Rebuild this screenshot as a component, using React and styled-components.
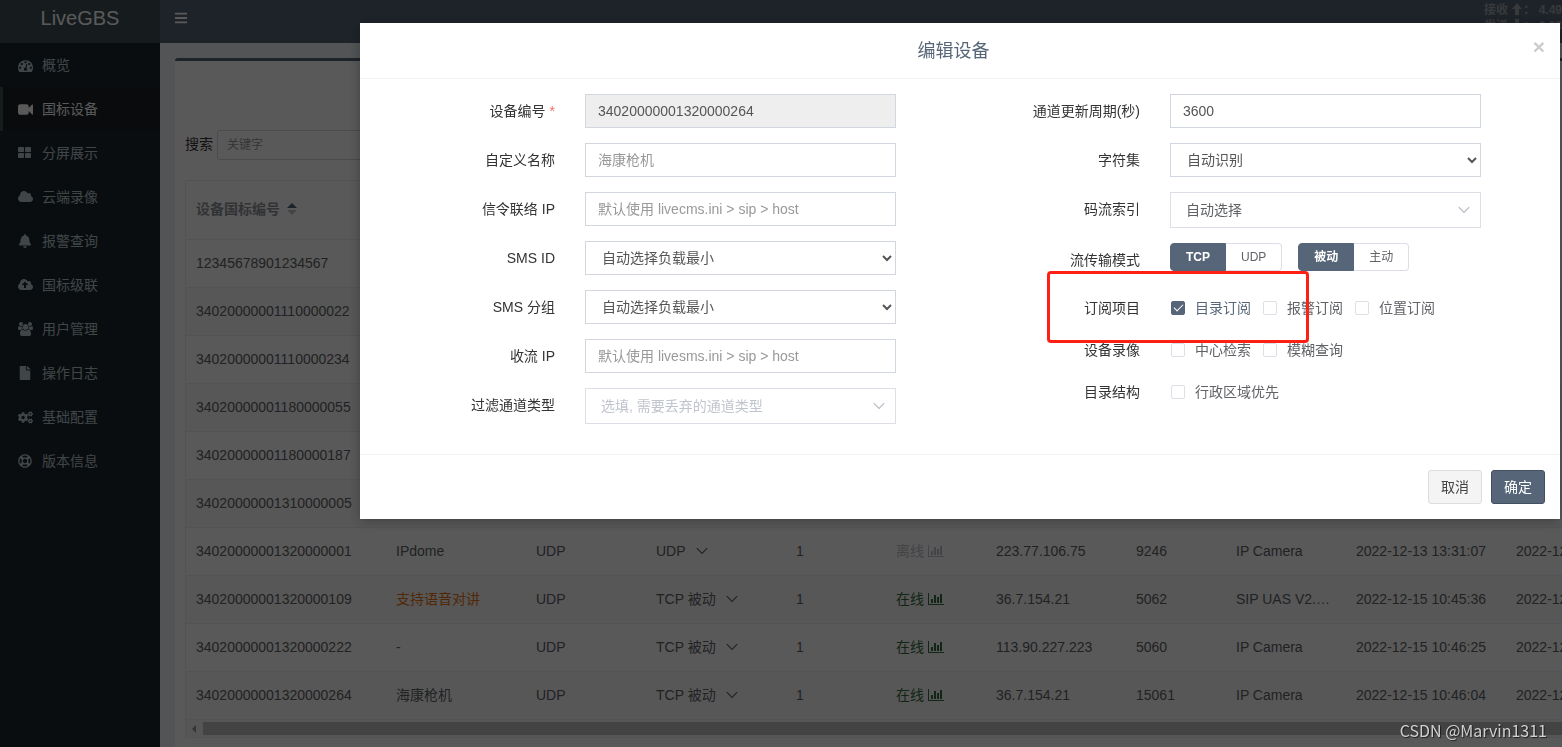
import React, { useState } from "react";
import styled, { createGlobalStyle } from "styled-components";
import { FaBars, FaBell, FaCogs, FaFile, FaRegLifeRing } from "react-icons/fa";

const DashboardIcon = () => (
  <svg viewBox="0 0 1792 1792" width="15" height="15" fill="currentColor">
    <path d="M384 1152q0-53-37.5-90.5t-90.5-37.5-90.5 37.5-37.5 90.5 37.5 90.5 90.5 37.5 90.5-37.5 37.5-90.5zm192-448q0-53-37.5-90.5t-90.5-37.5-90.5 37.5-37.5 90.5 37.5 90.5 90.5 37.5 90.5-37.5 37.5-90.5zm428 481l101-382q6-26-7.5-48.5t-38.5-29.5-48 6.5-30 39.5l-101 382q-60 5-107 43.5t-63 98.5q-20 77 20 146t117 89 146-20 89-117q16-60-6-117t-72-91zm660-33q0-53-37.5-90.5t-90.5-37.5-90.5 37.5-37.5 90.5 37.5 90.5 90.5 37.5 90.5-37.5 37.5-90.5zm-640-640q0-53-37.5-90.5t-90.5-37.5-90.5 37.5-37.5 90.5 37.5 90.5 90.5 37.5 90.5-37.5 37.5-90.5zm448 192q0-53-37.5-90.5t-90.5-37.5-90.5 37.5-37.5 90.5 37.5 90.5 90.5 37.5 90.5-37.5 37.5-90.5zm320 448q0 261-141 483-19 29-54 29h-1402q-35 0-54-29-141-221-141-483 0-182 71-348t191-286 286-191 348-71 348 71 286 191 191 286 71 348z" />
  </svg>
);

const CameraIcon = () => (
  <svg viewBox="0 0 1792 1792" width="15" height="15" fill="currentColor">
    <path d="M1792 352v1088q0 42-39 59-13 5-25 5-27 0-45-19l-403-403v166q0 119-84.5 203.5t-203.5 84.5h-704q-119 0-203.5-84.5t-84.5-203.5v-704q0-119 84.5-203.5t203.5-84.5h704q119 0 203.5 84.5t84.5 203.5v165l403-402q18-19 45-19 12 0 25 5 39 17 39 59z" />
  </svg>
);

const GridIcon = () => (
  <svg viewBox="64 0 1664 1792" width="13" height="14" fill="currentColor">
    <path d="M832 1024v384q0 52-38 90t-90 38h-512q-52 0-90-38t-38-90v-384q0-52 38-90t90-38h512q52 0 90 38t38 90zm0-768v384q0 52-38 90t-90 38h-512q-52 0-90-38t-38-90v-384q0-52 38-90t90-38h512q52 0 90 38t38 90zm896 768v384q0 52-38 90t-90 38h-512q-52 0-90-38t-38-90v-384q0-52 38-90t90-38h512q52 0 90 38t38 90zm0-768v384q0 52-38 90t-90 38h-512q-52 0-90-38t-38-90v-384q0-52 38-90t90-38h512q52 0 90 38t38 90z" />
  </svg>
);

const CLOUD = "M1920 1152q0 159-112.5 271.5t-271.5 112.5h-1088q-185 0-316.5-131.5t-131.5-316.5q0-130 70-240t188-165q-2-30-2-43 0-212 150-362t362-150q156 0 285.5 87t188.5 231q71-62 166-62 106 0 181 75t75 181q0 76-41 138 130 31 213.5 135.5t83.5 238.5z";
const UP_ARROW = "M1280 864q0-14-9-23l-352-352q-9-9-23-9t-23 9l-351 351q-10 12-10 24 0 14 9 23t23 9h224v352q0 13 9.5 22.5t22.5 9.5h192q13 0 22.5-9.5t9.5-22.5v-352h224q13 0 22.5-9.5t9.5-22.5z";

const CloudIcon = ({ upload }) => (
  <svg viewBox="0 0 1920 1792" width="15" height="14" fill="currentColor" fillRule="evenodd">
    <path d={upload ? CLOUD + UP_ARROW : CLOUD} />
  </svg>
);

const UsersIcon = () => (
  <svg viewBox="-64 0 1920 1792" width="15" height="14" fill="currentColor">
    <path d="M529 896q-162 5-265 128h-134q-82 0-138-40.5t-56-118.5q0-353 124-353 6 0 43.5 21t97.5 42.5 119 21.5q67 0 133-23-5 37-5 66 0 139 81 256zm1071 637q0 120-73 189.5t-194 69.5h-874q-121 0-194-69.5t-73-189.5q0-53 3.5-103.5t14-109 26.5-108.5 43-97.5 62-81 85.5-53.5 111.5-20q10 0 43 21.5t73 48 107 48 135 21.5 135-21.5 107-48 73-48 43-21.5q61 0 111.5 20t85.5 53.5 62 81 43 97.5 26.5 108.5 14 109 3.5 103.5zm-1024-1277q0 106-75 181t-181 75-181-75-75-181 75-181 181-75 181 75 75 181zm704 384q0 159-112.5 271.5t-271.5 112.5-271.5-112.5-112.5-271.5 112.5-271.5 271.5-112.5 271.5 112.5 112.5 271.5zm576 225q0 78-56 118.5t-138 40.5h-134q-103-123-265-128 81-117 81-256 0-29-5-66 66 23 133 23 59 0 119-21.5t97.5-42.5 43.5-21q124 0 124 353zm-128-609q0 106-75 181t-181 75-181-75-75-181 75-181 181-75 181 75 75 181z" />
  </svg>
);

const ChartIcon = () => (
  <svg viewBox="0 0 2048 1792" width="16" height="14" fill="currentColor">
    <path d="M640 896v512h-256v-512h256zm384-512v1024h-256v-1024h256zm1024 1152v128h-2048v-1536h128v1408h1920zm-640-896v768h-256v-768h256zm384-384v1152h-256v-1152h256z" />
  </svg>
);

const ArrowIcon = ({ down }) => (
  <svg viewBox="0 0 12 12" width="12" height="12" fill="currentColor">
    <path d={down ? "M4 0h4v6h3L6 12 1 6h3z" : "M4 12h4V6h3L6 0 1 6h3z"} />
  </svg>
);

const SortIcon = () => (
  <svg viewBox="0 0 10 12" width="10" height="12">
    <path d="M5 0l5 5H0z" fill="#566678" />
    <path d="M5 12L0 7h10z" fill="#c0c4cc" />
  </svg>
);

const ChevronIcon = () => (
  <svg viewBox="0 0 12 8" width="12" height="8" fill="none" stroke="currentColor" strokeWidth="1.1">
    <path d="M0.8 1.2L6 6.4l5.2-5.2" />
  </svg>
);

const menu = [
  { label: "概览", icon: <DashboardIcon /> },
  { label: "国标设备", icon: <CameraIcon />, active: true },
  { label: "分屏展示", icon: <GridIcon /> },
  { label: "云端录像", icon: <CloudIcon /> },
  { label: "报警查询", icon: <FaBell size={14} /> },
  { label: "国标级联", icon: <CloudIcon upload /> },
  { label: "用户管理", icon: <UsersIcon /> },
  { label: "操作日志", icon: <FaFile size={14} /> },
  { label: "基础配置", icon: <FaCogs size={15} /> },
  { label: "版本信息", icon: <FaRegLifeRing size={14} /> },
];

const columns = [200, 140, 120, 140, 100, 100, 140, 100, 120, 160, 160];

const devices = [
  { id: "12345678901234567" },
  { id: "34020000001110000022" },
  { id: "34020000001110000234" },
  { id: "34020000001180000055" },
  { id: "34020000001180000187" },
  { id: "34020000001310000005" },
  { id: "34020000001320000001", name: "IPdome", mode: "UDP", ip: "223.77.106.75", port: "9246", vendor: "IP Camera", time: "2022-12-13 13:31:07" },
  { id: "34020000001320000109", name: "支持语音对讲", talk: true, mode: "TCP 被动", online: true, ip: "36.7.154.21", port: "5062", vendor: "SIP UAS V2.1.4.0", time: "2022-12-15 10:45:36" },
  { id: "34020000001320000222", name: "-", mode: "TCP 被动", online: true, ip: "113.90.227.223", port: "5060", vendor: "IP Camera", time: "2022-12-15 10:46:25" },
  { id: "34020000001320000264", name: "海康枪机", mode: "TCP 被动", online: true, ip: "36.7.154.21", port: "15061", vendor: "IP Camera", time: "2022-12-15 10:46:04" },
];

const Field = ({ id, label, required, children }) => (
  <FormRow>
    <FieldLabel htmlFor={id}>
      {label}
      {required && <Required>*</Required>}
    </FieldLabel>
    <div>{children}</div>
  </FormRow>
);

const NativeSelect = ({ id, children }) => (
  <Select id={id}>
    <option>{children}</option>
  </Select>
);

const SoftSelect = ({ id, empty, children }) => (
  <SoftWrap>
    <SoftControl id={id} $empty={empty}>
      <option>{children}</option>
    </SoftControl>
    <ChevronIcon />
  </SoftWrap>
);

const Segmented = ({ name, options }) => {
  const [value, setValue] = useState(options[0]);
  return (
    <Segments>
      {options.map((option) => (
        <Segment key={option} $checked={value === option}>
          <input type="radio" name={name} checked={value === option} onChange={() => setValue(option)} />
          {option}
        </Segment>
      ))}
    </Segments>
  );
};

const Check = ({ label, defaultChecked }) => {
  const [checked, setChecked] = useState(!!defaultChecked);
  return (
    <CheckLabel $checked={checked}>
      <input type="checkbox" checked={checked} onChange={() => setChecked(!checked)} />
      {label}
    </CheckLabel>
  );
};

const DeviceTable = () => (
  <TableFrame>
    <Table>
      <colgroup>
        {columns.map((width, i) => <col key={i} width={width} />)}
      </colgroup>
      <thead>
        <tr>
          <th scope="col"><HeadCell>设备国标编号 <SortIcon /></HeadCell></th>
          <td colSpan={10} />
        </tr>
      </thead>
      <tbody>
        {devices.map((d) => (
          <tr key={d.id}>
            <td>{d.id}</td>
            {d.mode ? (
              <>
                <NameCell $talk={d.talk}>{d.name}</NameCell>
                <td>UDP</td>
                <td><Mode>{d.mode} <ChevronIcon /></Mode></td>
                <td>1</td>
                <td><Status $online={d.online}>{d.online ? "在线" : "离线"}<ChartIcon /></Status></td>
                <td>{d.ip}</td>
                <td>{d.port}</td>
                <td>{d.vendor}</td>
                <td>{d.time}</td>
                <td>{d.time}</td>
              </>
            ) : <td colSpan={10} />}
          </tr>
        ))}
      </tbody>
    </Table>
    <ScrollTrack>
      <ScrollArrow viewBox="0 0 4 8"><path d="M4 0v8L0 4z" /></ScrollArrow>
      <ScrollThumb />
    </ScrollTrack>
  </TableFrame>
);

const EditDialog = () => (
  <Dialog role="dialog" aria-labelledby="dialog-title">
    <DialogHeader>
      <h4 id="dialog-title">编辑设备</h4>
      <CloseButton type="button" aria-label="关闭">×</CloseButton>
    </DialogHeader>
    <DialogBody>
      <FormColumn>
        <Field id="serial" label="设备编号" required><Input id="serial" defaultValue="34020000001320000264" disabled /></Field>
        <Field id="name" label="自定义名称"><Input id="name" placeholder="海康枪机" /></Field>
        <Field id="contact" label="信令联络 IP"><Input id="contact" placeholder="默认使用 livecms.ini > sip > host" /></Field>
        <Field id="sms" label="SMS ID"><NativeSelect id="sms">自动选择负载最小</NativeSelect></Field>
        <Field id="group" label="SMS 分组"><NativeSelect id="group">自动选择负载最小</NativeSelect></Field>
        <Field id="recv" label="收流 IP"><Input id="recv" placeholder="默认使用 livesms.ini > sip > host" /></Field>
        <Field id="filter" label="过滤通道类型"><SoftSelect id="filter" empty>选填, 需要丢弃的通道类型</SoftSelect></Field>
      </FormColumn>
      <FormColumn>
        <Field id="period" label="通道更新周期(秒)"><Input id="period" defaultValue="3600" /></Field>
        <Field id="charset" label="字符集"><NativeSelect id="charset">自动识别</NativeSelect></Field>
        <Field id="stream" label="码流索引"><SoftSelect id="stream">自动选择</SoftSelect></Field>
        <FormRow role="group" aria-label="流传输模式">
          <GroupLabel>流传输模式</GroupLabel>
          <ModeRow>
            <Segmented name="transport" options={["TCP", "UDP"]} />
            <Segmented name="direction" options={["被动", "主动"]} />
          </ModeRow>
        </FormRow>
        <FormRow role="group" aria-label="订阅项目">
          <GroupLabel $short>订阅项目</GroupLabel>
          <CheckRow>
            <Check label="目录订阅" defaultChecked />
            <Check label="报警订阅" />
            <Check label="位置订阅" />
          </CheckRow>
        </FormRow>
        <FormRow role="group" aria-label="设备录像">
          <GroupLabel $short>设备录像</GroupLabel>
          <CheckRow>
            <Check label="中心检索" />
            <Check label="模糊查询" />
          </CheckRow>
        </FormRow>
        <FormRow role="group" aria-label="目录结构">
          <GroupLabel $short>目录结构</GroupLabel>
          <CheckRow>
            <Check label="行政区域优先" />
          </CheckRow>
        </FormRow>
      </FormColumn>
    </DialogBody>
    <DialogFooter>
      <Button type="button">取消</Button>
      <Button type="button" $primary>确定</Button>
    </DialogFooter>
    <Highlight />
  </Dialog>
);

const App = () => (
  <>
    <GlobalStyle />
    <Shell>
      <Sidebar>
        <Logo href="#">LiveGBS</Logo>
        <nav>
          {menu.map((item) => (
            <NavItem key={item.label} href="#" $active={item.active}>
              <NavIcon>{item.icon}</NavIcon>
              {item.label}
            </NavItem>
          ))}
        </nav>
      </Sidebar>
      <Main>
        <TopBar>
          <MenuButton type="button" aria-label="菜单"><FaBars size={14} /></MenuButton>
          <Traffic>
            <span>接收 <ArrowIcon />： 4.49M</span>
            <span>发送 <ArrowIcon down />： 0.33M</span>
          </Traffic>
        </TopBar>
        <Box>
          <SearchRow>
            <label htmlFor="search">搜索</label>
            <SearchInput id="search" placeholder="关键字" />
          </SearchRow>
          <DeviceTable />
        </Box>
      </Main>
    </Shell>
    <Backdrop>
      <EditDialog />
    </Backdrop>
    <Watermark>CSDN @Marvin1311</Watermark>
  </>
);

const GlobalStyle = createGlobalStyle`
*, *::before, *::after {
  box-sizing: border-box;
}
body {
  margin: 0;
  overflow: hidden;
  color: #333;
  font: 14px/20px "Liberation Sans", "Noto Sans CJK SC", sans-serif;
}
input, select, button {
  font: inherit;
  margin: 0;
}
a {
  text-decoration: none;
}
svg {
  flex: none;
}
`;

const Shell = styled.div`
display: flex;
height: 100vh;
overflow: hidden;
background: #ecf0f5;
`;

const Sidebar = styled.aside`
flex: none;
width: 160px;
background: #1e262d;
`;

const Logo = styled.a`
display: block;
height: 43px;
line-height: 36px;
font-size: 20px;
text-align: center;
color: #fff;
background: #414f57;
`;

const NavItem = styled.a`
display: flex;
align-items: center;
height: 44px;
padding-left: 15px;
border-left: 3px solid ${({ $active }) => ($active ? "#414f57" : "transparent")};
color: ${({ $active }) => ($active ? "#fff" : "#b8c7ce")};
background: ${({ $active }) => ($active ? "#1a2127" : "transparent")};
`;

const NavIcon = styled.span`
display: flex;
width: 24px;
`;

const Main = styled.main`
flex: 1;
min-width: 0;
display: flex;
flex-direction: column;
`;

const TopBar = styled.header`
display: flex;
flex: none;
height: 43px;
overflow: hidden;
color: #fff;
background: #566678;
`;

const MenuButton = styled.button`
display: flex;
align-items: center;
height: 36px;
padding: 0 14px;
border: 0;
color: inherit;
background: none;
`;

const Traffic = styled.div`
display: flex;
flex-direction: column;
flex: none;
width: 78px;
margin-left: auto;
padding-top: 2px;
font-size: 12px;
font-weight: bold;
line-height: 16px;
white-space: nowrap;
color: #a0a4aa;

svg {
  vertical-align: -1px;
}
`;

const Box = styled.section`
flex: 1;
margin: 15px 0 0 15px;
padding: 69px 0 0 10px;
border-top: 3px solid #566678;
border-radius: 3px 0 0 0;
background: #fff;
`;

const SearchRow = styled.div`
display: flex;
gap: 4px;
margin-bottom: 20px;
line-height: 28px;
`;

const SearchInput = styled.input`
width: 200px;
height: 30px;
padding: 5px 9px;
font-size: 12px;
border: 1px solid #d2d6de;
border-radius: 3px;

&::placeholder {
  color: #999;
}
`;

const TableFrame = styled.div`
overflow: hidden;
border: solid #ebeef5;
border-width: 1px 0 1px 1px;
`;

const Table = styled.table`
width: 1480px;
table-layout: fixed;
border-collapse: separate;
border-spacing: 0;

th, td {
  height: 48px;
  padding: 0 10px 2px;
  overflow: hidden;
  white-space: nowrap;
  text-overflow: ellipsis;
  text-align: left;
  border-bottom: 1px solid #ebeef5;
  color: #606266;
}
thead th, thead td {
  height: 59px;
  color: #909399;
}
tbody tr:nth-child(even) {
  background: #fafafa;
}
`;

const HeadCell = styled.span`
display: flex;
align-items: center;
gap: 7px;
`;

const NameCell = styled.td`
&& {
  color: ${({ $talk }) => ($talk ? "#e6730f" : "#606266")};
}
`;

const Mode = styled.span`
display: flex;
align-items: center;
gap: 10px;
`;

const Status = styled.span`
display: flex;
align-items: center;
gap: 4px;
color: ${({ $online }) => ($online ? "#356a40" : "#c0c4cc")};
`;

const ScrollTrack = styled.div`
display: flex;
align-items: center;
height: 17px;
padding-left: 6px;
gap: 7px;
background: #f6f6f6;
`;

const ScrollArrow = styled.svg`
width: 4px;
height: 8px;
fill: #999;
`;

const ScrollThumb = styled.div`
flex: 1;
height: 13px;
background: #c1c1c1;
`;

const Backdrop = styled.div`
position: fixed;
inset: 0;
padding: 23px 2px 0 360px;
background: rgba(0, 0, 0, 0.65);
`;

const Dialog = styled.div`
position: relative;
background: #fff;
box-shadow: 0 2px 12px rgba(0, 0, 0, 0.3);
`;

const DialogHeader = styled.div`
display: flex;
align-items: flex-start;
padding: 16px 14px 14px 15px;
border-bottom: 1px solid #f4f4f4;

h4 {
  flex: 1;
  margin: 0;
  font-size: 18px;
  font-weight: normal;
  line-height: 25px;
  text-align: center;
  color: #566678;
}
`;

const CloseButton = styled.button`
width: 14px;
padding: 0;
border: 0;
font-size: 21px;
font-weight: bold;
line-height: 16px;
color: #ccc;
background: none;
`;

const DialogBody = styled.div`
display: grid;
grid-template-columns: 1fr 1fr;
padding: 15px;
`;

const FormColumn = styled.div`
display: flex;
flex-direction: column;
gap: 15px;
padding-bottom: 15px;
`;

const FormRow = styled.div`
display: grid;
grid-template-columns: 4fr 7fr 1fr;
align-items: start;

& > * {
  margin: 0 15px;
}
`;

const FieldLabel = styled.label`
line-height: 34px;
text-align: right;
`;

const GroupLabel = styled.span`
line-height: ${({ $short }) => ($short ? 28 : 34)}px;
height: ${({ $short }) => ($short ? 27 : 34)}px;
text-align: right;
`;

const Required = styled.span`
margin-left: 4px;
color: #f56c6c;
`;

const Input = styled.input`
display: block;
width: 100%;
height: 34px;
padding: 6px 12px;
border: 1px solid #d2d6de;
color: #555;
background: #fff;

&::placeholder {
  color: #999;
}
&:disabled {
  background: #eee;
}
`;

const Select = styled.select`
display: block;
width: 100%;
height: 34px;
padding: 6px 12px;
padding-right: 1px;
border: 1px solid #d2d6de;
border-radius: 0;
color: #555;
background: #fff;
`;

const SoftWrap = styled.div`
display: grid;
align-items: center;

& > * {
  grid-area: 1 / 1;
}
svg {
  justify-self: end;
  margin-right: 11px;
  color: #b4b8c0;
  pointer-events: none;
}
`;

const SoftControl = styled.select`
appearance: none;
width: 100%;
height: 36px;
padding: 0 15px;
border: 1px solid #dcdfe6;
border-radius: 0;
color: ${({ $empty }) => ($empty ? "#c0c4cc" : "#606266")};
background: #fff;
`;

const ModeRow = styled.div`
display: flex;
gap: 16px;
height: 36px;
`;

const Segments = styled.div`
display: flex;
height: 28px;
`;

const Segment = styled.label`
padding: 0 15px;
border: 1px solid ${({ $checked }) => ($checked ? "#566678" : "#dcdfe6")};
border-left-width: ${({ $checked }) => ($checked ? 1 : 0)}px;
font-size: 12px;
font-weight: ${({ $checked }) => ($checked ? "bold" : "normal")};
line-height: 26px;
color: ${({ $checked }) => ($checked ? "#fff" : "#606266")};
background: ${({ $checked }) => ($checked ? "#566678" : "#fff")};

&:first-child {
  border-radius: 4px 0 0 4px;
}
&:last-child {
  border-radius: 0 4px 4px 0;
}
input {
  position: absolute;
  opacity: 0;
  pointer-events: none;
}
`;

const CheckRow = styled.div`
display: flex;
gap: 12px;
height: 27px;
padding-left: 1px;
white-space: nowrap;
`;

const CheckLabel = styled.label`
display: flex;
align-items: center;
gap: 10px;
color: ${({ $checked }) => ($checked ? "#566678" : "#606266")};

input {
  appearance: none;
  display: flex;
  justify-content: center;
  width: 14px;
  height: 14px;
  border: 1px solid #dcdfe6;
  border-radius: 2px;
  background: #fff;
}
input:checked {
  border-color: #566678;
  background: #566678;
}
input:checked::after {
  content: "";
  width: 5px;
  height: 9px;
  border: solid #fff;
  border-width: 0 1px 1px 0;
  transform: rotate(45deg);
}
`;

const DialogFooter = styled.div`
display: flex;
justify-content: flex-end;
gap: 9px;
padding: 15px;
border-top: 1px solid #f4f4f4;
`;

const Button = styled.button`
height: 34px;
padding: 6px 12px;
border: 1px solid ${({ $primary }) => ($primary ? "#435060" : "#ddd")};
border-radius: 3px;
color: ${({ $primary }) => ($primary ? "#fff" : "#444")};
background: ${({ $primary }) => ($primary ? "#566678" : "#f4f4f4")};
`;

/* annotation frame lying over the subscription row */
const Highlight = styled.div`
position: absolute;
top: 248px;
right: 251px;
width: 262px;
height: 72px;
border: 3px solid #ff2015;
border-radius: 4px;
pointer-events: none;
`;

const Watermark = styled.div`
position: fixed;
right: 15px;
bottom: 7px;
font-family: "Noto Sans CJK SC", sans-serif;
font-size: 16px;
color: #d0d0d0;
text-shadow: 1px 1px 1px rgba(0, 0, 0, 0.6);
`;

export default App;
